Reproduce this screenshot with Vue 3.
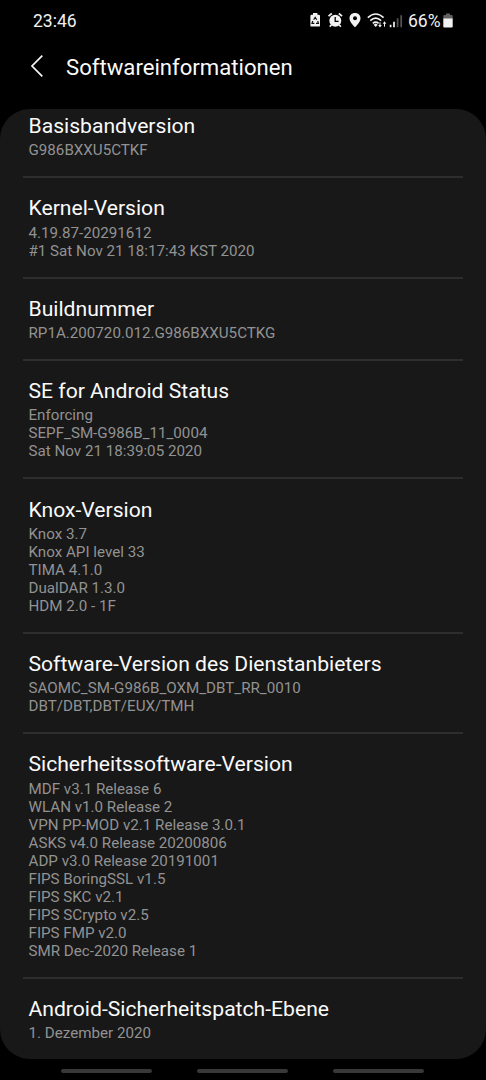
<script setup>
const items = [
  { title: 'Basisbandversion', lines: ['G986BXXU5CTKF'] },
  { title: 'Kernel-Version', lines: ['4.19.87-20291612', '#1 Sat Nov 21 18:17:43 KST 2020'] },
  { title: 'Buildnummer', lines: ['RP1A.200720.012.G986BXXU5CTKG'] },
  { title: 'SE for Android Status', lines: ['Enforcing', 'SEPF_SM-G986B_11_0004', 'Sat Nov 21 18:39:05 2020'] },
  { title: 'Knox-Version', lines: ['Knox 3.7', 'Knox API level 33', 'TIMA 4.1.0', 'DualDAR 1.3.0', 'HDM 2.0 - 1F'] },
  { title: 'Software-Version des Dienstanbieters', lines: ['SAOMC_SM-G986B_OXM_DBT_RR_0010', 'DBT/DBT,DBT/EUX/TMH'] },
  {
    title: 'Sicherheitssoftware-Version',
    lines: [
      'MDF v3.1 Release 6',
      'WLAN v1.0 Release 2',
      'VPN PP-MOD v2.1 Release 3.0.1',
      'ASKS v4.0 Release 20200806',
      'ADP v3.0 Release 20191001',
      'FIPS BoringSSL v1.5',
      'FIPS SKC v2.1',
      'FIPS SCrypto v2.5',
      'FIPS FMP v2.0',
      'SMR Dec-2020 Release 1',
    ],
  },
  { title: 'Android-Sicherheitspatch-Ebene', lines: ['1. Dezember 2020'] },
]
</script>

<template>
  <div class="screen">
    <header class="status">
      <span class="clock">23:46</span>
      <svg class="icons" width="96" height="20" viewBox="0 0 96 20">
        <!-- battery with recycling mark -->
        <path d="M3 2.700V.9h4.400v1.800h1.400q1.200 0 1.200 1.200v9.500q0 1.200-1.200 1.200H1.600Q.4 14.600.4 13.400V3.900q0-1.200 1.200-1.200z" fill="#f2f2f2" />
        <path d="M3.700 7.700 5.200 5.300 6.700 7.700M7.700 9l.7 2.400H6M4.400 11.400H2L2.800 9" fill="none" stroke="#111" stroke-width="1.200" />
        <!-- alarm clock -->
        <circle cx="25.300" cy="8.700" r="6" fill="#f2f2f2" />
        <path d="M18.500 4.200 21.800 1.500M32.100 4.200 28.800 1.500M21.400 13l-1.700 1.700M29.200 13l1.700 1.700" stroke="#f2f2f2" stroke-width="1.700" fill="none" />
        <path d="M25.200 5v4.300h3.400" fill="none" stroke="#000" stroke-width="1.300" />
        <!-- location pin -->
        <path d="M45 1.100c-3.300 0-5.500 2.200-5.500 5.300 0 3.700 5.500 8.800 5.500 8.800s5.500-5.100 5.500-8.800c0-3.100-2.200-5.300-5.500-5.300z" fill="#f2f2f2" />
        <circle cx="45" cy="6.200" r="2" fill="#000" />
        <!-- wifi with traffic arrows -->
        <path d="M57.800 5.600q7.900-7.200 15.800 0M60.300 8.600q5.400-5 10.800 0M62.800 11.300q2.900-2.500 5.800 0" fill="none" stroke="#f2f2f2" stroke-width="1.600" />
        <path d="m63.600 12.800 2.100-1.200 2.100 1.200-2.100 2.200z" fill="#f2f2f2" />
        <path d="M70 10.300v4M74.500 14.700v-4" stroke="#f2f2f2" stroke-width="1" />
        <path d="M68.200 13h3.600L70 15.500zM72.700 11.700h3.600l-1.800-2.500z" fill="#f2f2f2" />
        <!-- mobile signal -->
        <path d="M80.600 12.800v2.500M84 9.800v5.500" stroke="#f2f2f2" stroke-width="1.700" />
        <path d="M87.600 6.300v9M91.200 3.300v12" stroke="#555" stroke-width="1.700" />
      </svg>
      <span class="percent">66%</span>
      <svg class="battery" width="10" height="16" viewBox="0 0 10 16">
        <path d="M3 2V.5h4V2h1.500q1.200 0 1.200 1.200V6H.3V3.200Q.3 2 1.500 2z" fill="#626262" />
        <path d="M.3 5.500h9.400v7.800q0 1.200-1.200 1.200h-7Q.3 14.500.3 13.300z" fill="#f2f2f2" />
      </svg>
    </header>

    <div class="bar">
      <svg class="back" width="14" height="24" viewBox="0 0 14 24">
        <path d="M12.300 1.700 2 12l10.300 10.300" fill="none" stroke="#f5f5f5" stroke-width="1.700" />
      </svg>
      <h1>Softwareinformationen</h1>
    </div>

    <main class="sheet">
      <div class="list">
        <section v-for="item in items" :key="item.title" class="item">
          <h2>{{ item.title }}</h2>
          <p v-for="line in item.lines" :key="line">{{ line }}</p>
        </section>
      </div>
    </main>

    <nav class="nav">
      <i></i><i></i><i></i>
    </nav>
  </div>
</template>

<style>
body {
  background: #000;
}
</style>

<style scoped>
.screen {
  width: 486px;
  height: 1080px;
  overflow: hidden;
  display: flex;
  flex-direction: column;
  background: #000;
  color: #fafafa;
  font-family: Roboto, sans-serif;
}
.status {
  height: 41px;
  flex: none;
  display: flex;
  align-items: center;
  box-sizing: border-box;
  padding: 0 33px 0 33px;
  font-size: 17.500px;
  color: #f0f0f0;
}
.clock {
  flex: 1;
}
.icons {
  margin: 3px 2px 0 0;
}
.percent {
  width: 35px;
  white-space: nowrap;
}
.battery {
  flex: none;
}
.bar {
  height: 67.500px;
  flex: none;
  display: flex;
  box-sizing: border-box;
  padding: 13px 0 0 30px;
}
.back {
  flex: none;
}
h1 {
  margin: 0 0 0 22px;
  font-size: 22.150px;
  line-height: 26px;
  font-weight: 400;
}
.sheet {
  height: 950.500px;
  flex: none;
  overflow: hidden;
  background: #181818;
  border-radius: 30px;
}
.list {
  margin: -12.600px 23px 0;
}
.item {
  box-sizing: border-box;
  padding: 17.200px 0 17px 5.500px;
  border-bottom: 2px solid #2e2e2e;
}
.item:last-child {
  border-bottom: 0;
}
h2 {
  margin: 0 0 2.200px;
  font-size: 21.130px;
  line-height: 26px;
  font-weight: 400;
  white-space: nowrap;
}
p {
  margin: 0;
  font-size: 15.170px;
  line-height: 18px;
  color: #929292;
  white-space: nowrap;
}
.nav {
  flex: 1;
  display: flex;
  justify-content: center;
  gap: 45px;
  padding: 10px 1px 0 0;
}
.nav i {
  width: 91px;
  height: 4px;
  border-radius: 2px;
  background: #383838;
}
</style>
